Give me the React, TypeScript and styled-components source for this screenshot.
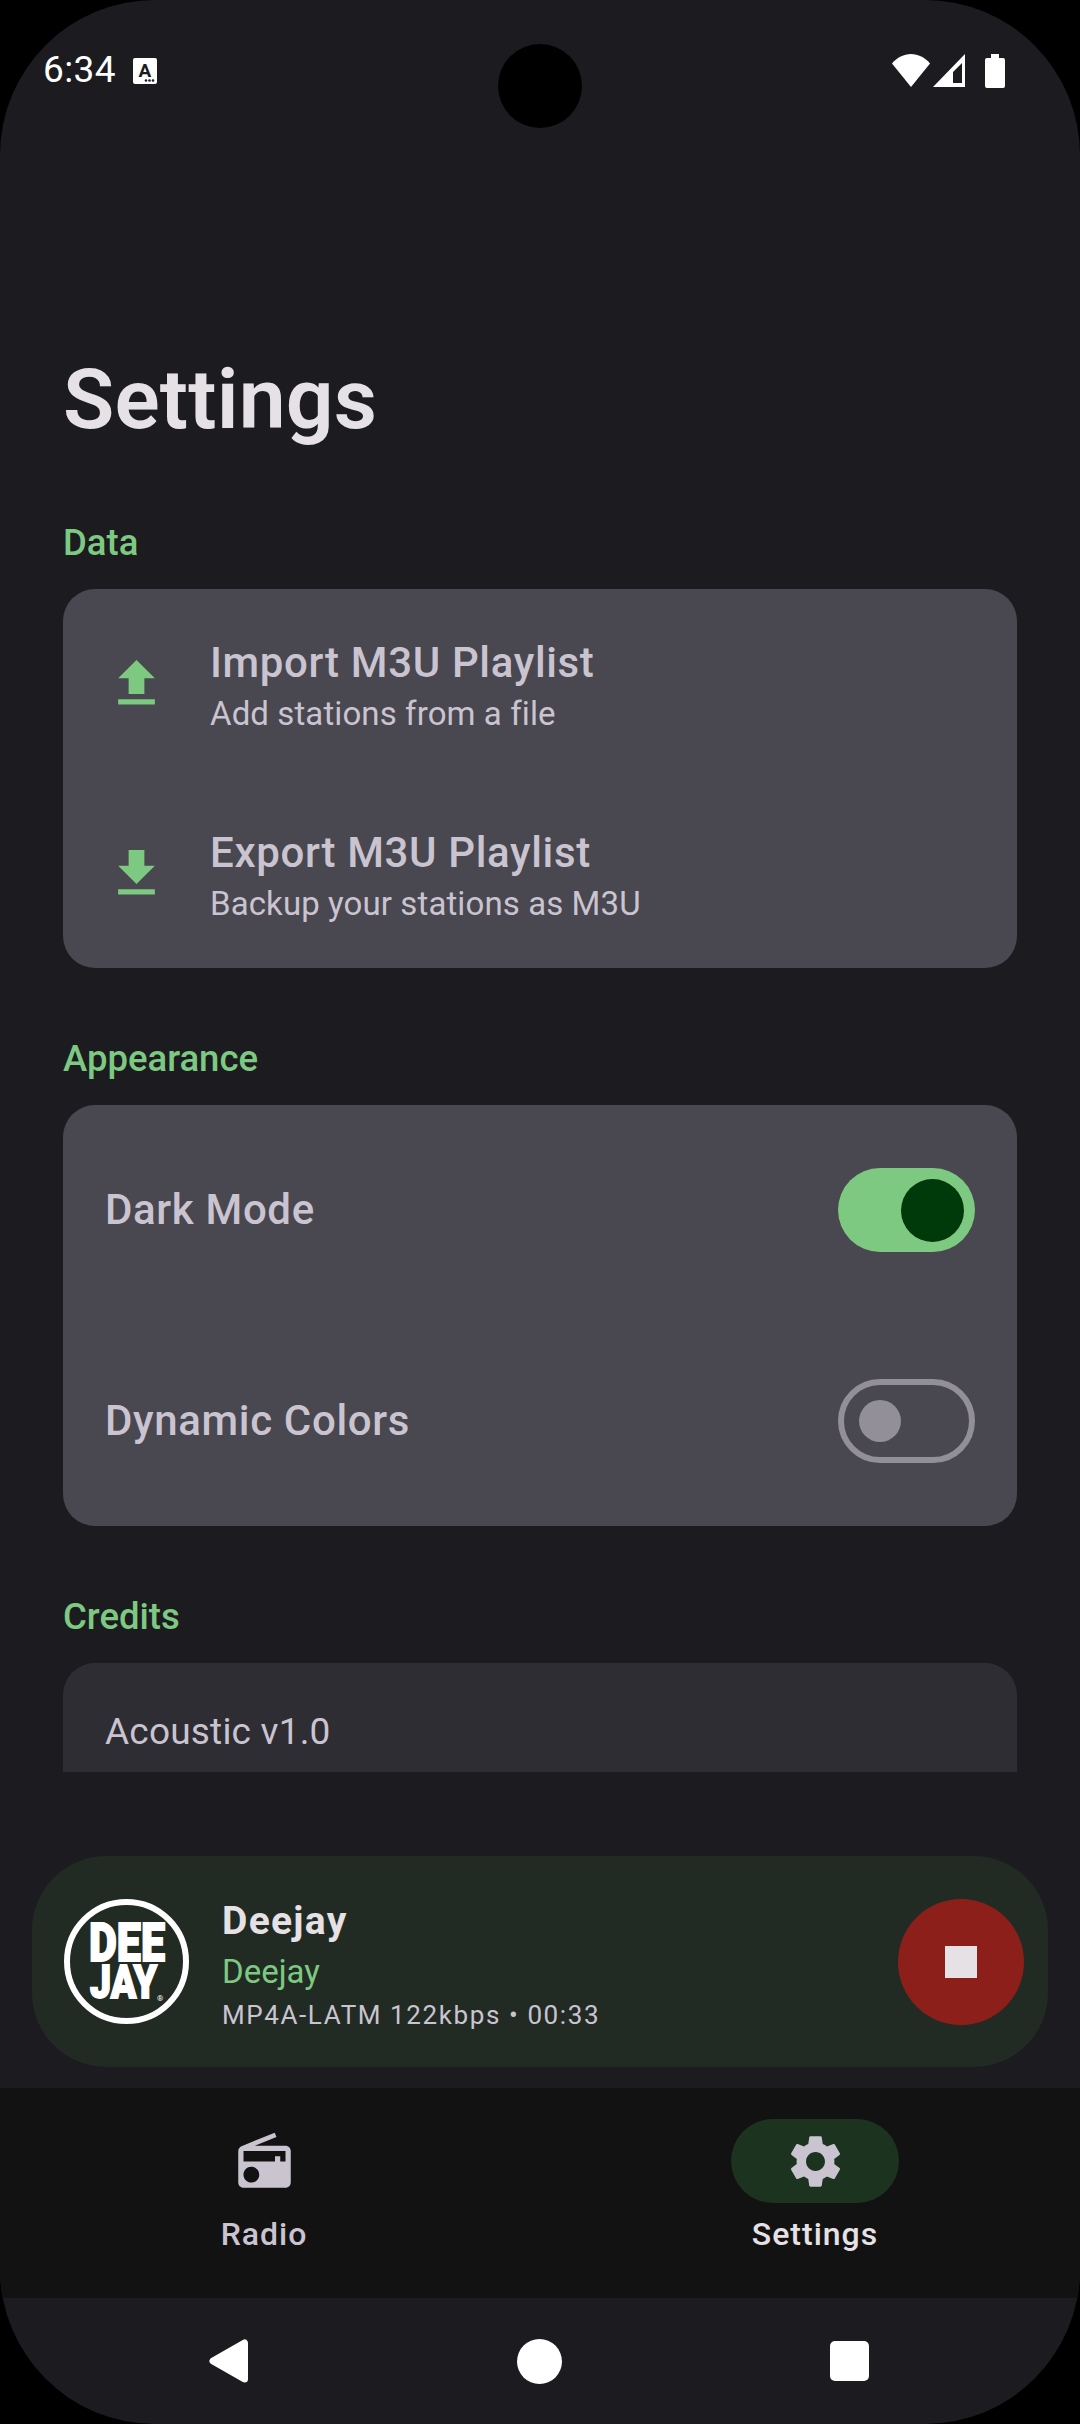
import React from "react";
import styled, { createGlobalStyle } from "styled-components";

const GlobalStyle = createGlobalStyle`
  html, body {
    margin: 0;
    padding: 0;
    background: #000;
    font-family: Roboto, "Noto Sans", sans-serif;
  }
`;

const green = "#7ec981";
const onSurface = "#e6e1e5";
const onVariant = "#cac4d0";

const Frame = styled.div`
  position: relative;
  display: flex;
  flex-direction: column;
  width: 1080px;
  height: 2424px;
  overflow: hidden;
  border-radius: 155px;
  background: #1c1b20;
`;

const StatusBar = styled.div`
  display: flex;
  flex: none;
  align-items: flex-start;
  height: 110px;
  padding: 48px 75px 0 43px;
  box-sizing: border-box;
  color: #fff;
`;

const Clock = styled.span`
  font-size: 37px;
  line-height: 44px;
  letter-spacing: 0.4px;
`;

const NotifIcon = styled.svg`
  margin: 10px 0 0 17px;
`;

const StatusIcons = styled.div`
  display: flex;
  gap: 3px;
  margin: 6px 0 0 auto;

  svg:last-child {
    margin-left: 17px;
  }
`;

const Camera = styled.div`
  position: absolute;
  top: 44px;
  left: 498px;
  width: 84px;
  height: 84px;
  border-radius: 50%;
  background: #000;
`;

const Scroll = styled.main`
  flex: none;
  height: 1662px;
  padding: 238px 63px 0;
  box-sizing: border-box;
  overflow: hidden;
`;

const Title = styled.h1`
  margin: 0;
  color: ${onSurface};
  font-size: 84px;
  line-height: 104px;
  font-weight: 600;
  letter-spacing: 0.2px;
`;

const SectionLabel = styled.h2`
  margin: 64px 0 21px;
  padding-top: 2px;
  color: ${green};
  font-size: 36.5px;
  line-height: 50px;
  font-weight: 500;
`;

const Card = styled.section<{ $dim?: boolean }>`
  flex: none;
  border-radius: 32px;
  background: ${(p) => (p.$dim ? "#2e2d33" : "#49474f")};
`;

const ActionRow = styled.div`
  display: flex;
  align-items: center;
  height: 189.5px;
  padding: 0 42px;
  gap: 42px;
  box-sizing: border-box;
`;

const ActionIcon = styled.svg`
  flex: none;
  fill: ${green};
`;

const ActionText = styled.div`
  display: flex;
  flex-direction: column;
  padding-top: 9px;
`;

const ItemTitle = styled.span`
  color: ${onVariant};
  font-size: 42px;
  line-height: 52px;
  font-weight: 500;
  letter-spacing: 0.65px;
`;

const ItemSub = styled.span`
  color: ${onVariant};
  font-size: 33px;
  line-height: 50px;
  letter-spacing: 0.1px;
`;

const ToggleRow = styled.div`
  display: flex;
  align-items: center;
  justify-content: space-between;
  height: 210.5px;
  padding: 0 42px;
  box-sizing: border-box;
`;

const SwitchTrack = styled.div<{ $on?: boolean }>`
  display: flex;
  align-items: center;
  justify-content: ${(p) => (p.$on ? "flex-end" : "flex-start")};
  width: 137px;
  height: 84px;
  padding: 0 ${(p) => (p.$on ? "11px" : "15px")};
  box-sizing: border-box;
  border-radius: 42px;
  border: ${(p) => (p.$on ? "none" : "6px solid #938f99")};
  background: ${(p) => (p.$on ? green : "transparent")};
`;

const SwitchThumb = styled.div<{ $on?: boolean }>`
  width: ${(p) => (p.$on ? "63px" : "42px")};
  height: ${(p) => (p.$on ? "63px" : "42px")};
  border-radius: 50%;
  background: ${(p) => (p.$on ? "#003a0a" : "#938f99")};
`;

const CreditRow = styled.div`
  padding: 44px 42px 0;
  height: 300px;
  box-sizing: border-box;
  color: ${onVariant};
  font-size: 37px;
  line-height: 50px;
  letter-spacing: 0.2px;
`;

const Player = styled.div`
  display: flex;
  flex: none;
  align-items: center;
  height: 211px;
  margin: 84px 32px 21px;
  padding: 0 24px 0 32px;
  box-sizing: border-box;
  border-radius: 74px;
  background: #212b24;
`;

const LogoText = styled.text`
  font-family: Roboto, sans-serif;
  font-weight: 900;
  fill: #fff;
  stroke: #fff;
  stroke-width: 1.8px;
`;

const TrackInfo = styled.div`
  display: flex;
  flex-direction: column;
  flex: 1;
  margin-left: 33px;
  padding-top: 8px;
`;

const TrackName = styled.span`
  color: ${onSurface};
  font-size: 39px;
  line-height: 46px;
  font-weight: 700;
  letter-spacing: 1.3px;
`;

const TrackArtist = styled.span`
  color: ${green};
  font-size: 33px;
  line-height: 46px;
  margin-top: 5px;
`;

const TrackMeta = styled.span`
  color: ${onVariant};
  font-size: 26px;
  line-height: 36px;
  letter-spacing: 1.6px;
  margin-top: 2px;
`;

const StopButton = styled.div`
  display: flex;
  align-items: center;
  justify-content: center;
  width: 126px;
  height: 126px;
  border-radius: 50%;
  background: #8d1f1a;
`;

const StopSquare = styled.div`
  width: 32px;
  height: 32px;
  background: ${onSurface};
`;

const NavBar = styled.nav`
  display: flex;
  flex: none;
  justify-content: space-between;
  height: 210px;
  padding: 31px 181px 0 180px;
  box-sizing: border-box;
  background: #121212;
`;

const NavItem = styled.div`
  display: flex;
  flex-direction: column;
  align-items: center;
  width: 168px;
`;

const NavPill = styled.div<{ $active?: boolean }>`
  display: flex;
  align-items: center;
  justify-content: center;
  width: 168px;
  height: 84px;
  border-radius: 42px;
  background: ${(p) => (p.$active ? "#1c331f" : "transparent")};
`;

const NavIcon = styled.svg`
  fill: ${onVariant};
`;

const NavLabel = styled.span<{ $active?: boolean }>`
  margin-top: 10px;
  color: ${(p) => (p.$active ? onSurface : onVariant)};
  font-size: 32px;
  line-height: 42px;
  font-weight: 500;
  letter-spacing: 1px;
`;

const SystemNav = styled.div`
  display: flex;
  flex: 1;
  align-items: center;
  justify-content: space-between;
  padding: 0 211px 0 209px;
`;

const HomeDot = styled.div`
  width: 45px;
  height: 45px;
  border-radius: 50%;
  background: #fff;
`;

const RecentSquare = styled.div`
  width: 39px;
  height: 40px;
  border-radius: 5px;
  background: #fff;
`;

const Icon24 = ({ d, size = 63 }: { d: string; size?: number }) => (
  <NavIcon width={size} height={size} viewBox="0 0 24 24">
    <path d={d} />
  </NavIcon>
);

const radioPath =
  "M3.24 6.15C2.51 6.43 2 7.17 2 8v12c0 1.1.89 2 2 2h16c1.11 0 2-.9 2-2V8c0-1.11-.89-2-2-2H8.3l8.26-3.34L15.88 1 3.24 6.15zM7 20c-1.66 0-3-1.34-3-3s1.34-3 3-3 3 1.34 3 3-1.34 3-3 3zm13-8h-2v-2h-2v2H4V8h16v4z";
const gearPath =
  "M19.14 12.94c.04-.3.06-.61.06-.94 0-.32-.02-.64-.07-.94l2.03-1.58c.18-.14.23-.41.12-.61l-1.92-3.32c-.12-.22-.37-.29-.59-.22l-2.39.96c-.5-.38-1.03-.7-1.62-.94l-.36-2.54c-.04-.24-.24-.41-.48-.41h-3.84c-.24 0-.43.17-.47.41l-.36 2.54c-.59.24-1.13.57-1.62.94l-2.39-.96c-.22-.08-.47 0-.59.22L2.74 8.87c-.12.21-.08.47.12.61l2.03 1.58c-.05.3-.09.63-.09.94s.02.64.07.94l-2.03 1.58c-.18.14-.23.41-.12.61l1.92 3.32c.12.22.37.29.59.22l2.39-.96c.5.38 1.03.7 1.62.94l.36 2.54c.05.24.24.41.48.41h3.84c.24 0 .44-.17.47-.41l.36-2.54c.59-.24 1.13-.56 1.62-.94l2.39.96c.22.08.47 0 .59-.22l1.92-3.32c.12-.22.07-.47-.12-.61l-2.01-1.58zM12 15.6c-1.98 0-3.6-1.62-3.6-3.6s1.62-3.6 3.6-3.6 3.6 1.62 3.6 3.6-1.62 3.6-3.6 3.6z";

const DeejayLogo = () => (
  <svg width="125" height="125" viewBox="0 0 125 125">
    <circle cx="62.5" cy="62.5" r="59.5" fill="none" stroke="#fff" strokeWidth="6" />
    <LogoText x="25" y="62" fontSize="53" textLength="76" lengthAdjust="spacingAndGlyphs">
      DEE
    </LogoText>
    <LogoText x="26" y="99" fontSize="47" textLength="67" lengthAdjust="spacingAndGlyphs">
      JAY
    </LogoText>
    <text x="93" y="102" fontSize="8" fill="#fff" fontFamily="Roboto, sans-serif">
      ®
    </text>
  </svg>
);

const App = () => (
  <Frame>
    <GlobalStyle />
    <StatusBar>
      <Clock>6:34</Clock>
      <NotifIcon width="24" height="26" viewBox="0 0 24 26">
        <rect width="24" height="26" rx="2" fill="#fff" />
        <text x="12" y="19" textAnchor="middle" fontSize="19" fontWeight="700" fontFamily="Roboto, sans-serif" fill="#1c1b20">
          A
        </text>
        <circle cx="13" cy="22.5" r="1.3" fill="#1c1b20" />
        <circle cx="16.5" cy="22.5" r="1.3" fill="#1c1b20" />
        <circle cx="20" cy="22.5" r="1.3" fill="#1c1b20" />
      </NotifIcon>
      <StatusIcons>
        <svg width="38" height="34" viewBox="0 0 38 34">
          <path d="M19 33 0 9.5C5 3.5 12 0 19 0s14 3.5 19 9.5z" fill="#fff" />
        </svg>
        <svg width="32" height="33" viewBox="0 0 32 33">
          <path fillRule="evenodd" d="M32 0v33H0zM29 9l-9 9v11h9z" fill="#fff" />
        </svg>
        <svg width="20" height="34" viewBox="0 0 20 34">
          <path d="M6 0h8v4h4a2 2 0 0 1 2 2v26a2 2 0 0 1-2 2H2a2 2 0 0 1-2-2V6a2 2 0 0 1 2-2h4z" fill="#fff" />
        </svg>
      </StatusIcons>
    </StatusBar>
    <Camera />

    <Scroll>
      <Title>Settings</Title>

      <SectionLabel>Data</SectionLabel>
      <Card>
        <ActionRow>
          <ActionIcon width="63" height="63" viewBox="0 0 24 24">
            <path d="M9 16h6v-6h4l-7-7-7 7h4zm-4 2h14v2H5z" />
          </ActionIcon>
          <ActionText>
            <ItemTitle>Import M3U Playlist</ItemTitle>
            <ItemSub>Add stations from a file</ItemSub>
          </ActionText>
        </ActionRow>
        <ActionRow>
          <ActionIcon width="63" height="63" viewBox="0 0 24 24">
            <path d="M19 9h-4V3H9v6H5l7 7 7-7zM5 18v2h14v-2H5z" />
          </ActionIcon>
          <ActionText>
            <ItemTitle>Export M3U Playlist</ItemTitle>
            <ItemSub>Backup your stations as M3U</ItemSub>
          </ActionText>
        </ActionRow>
      </Card>

      <SectionLabel>Appearance</SectionLabel>
      <Card>
        <ToggleRow>
          <ItemTitle>Dark Mode</ItemTitle>
          <SwitchTrack $on>
            <SwitchThumb $on />
          </SwitchTrack>
        </ToggleRow>
        <ToggleRow>
          <ItemTitle>Dynamic Colors</ItemTitle>
          <SwitchTrack>
            <SwitchThumb />
          </SwitchTrack>
        </ToggleRow>
      </Card>

      <SectionLabel>Credits</SectionLabel>
      <Card $dim>
        <CreditRow>Acoustic v1.0</CreditRow>
      </Card>
    </Scroll>

    <Player>
      <DeejayLogo />
      <TrackInfo>
        <TrackName>Deejay</TrackName>
        <TrackArtist>Deejay</TrackArtist>
        <TrackMeta>MP4A-LATM 122kbps • 00:33</TrackMeta>
      </TrackInfo>
      <StopButton>
        <StopSquare />
      </StopButton>
    </Player>

    <NavBar>
      <NavItem>
        <NavPill>
          <Icon24 d={radioPath} />
        </NavPill>
        <NavLabel>Radio</NavLabel>
      </NavItem>
      <NavItem>
        <NavPill $active>
          <Icon24 d={gearPath} />
        </NavPill>
        <NavLabel $active>Settings</NavLabel>
      </NavItem>
    </NavBar>

    <SystemNav>
      <svg width="39" height="44" viewBox="0 0 39 44">
        <path d="M4 22 35.5 4v36z" fill="#fff" stroke="#fff" strokeWidth="7" strokeLinejoin="round" />
      </svg>
      <HomeDot />
      <RecentSquare />
    </SystemNav>
  </Frame>
);

export default App;
